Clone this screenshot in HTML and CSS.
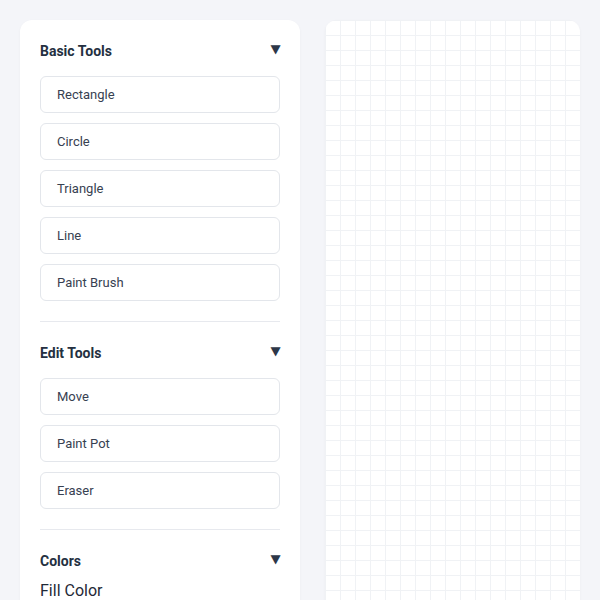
FILE: index.html
```html
<!DOCTYPE html>
<html>
<head>
<meta charset="utf-8">
<link rel="stylesheet" href="styles.css">
</head>
<body>
<div class="app">
  <aside class="panel">
    <section class="section">
      <div class="section-header"><h2>Basic Tools</h2><span class="caret">▼</span></div>
      <div class="tools">
        <button class="tool">Rectangle</button>
        <button class="tool">Circle</button>
        <button class="tool">Triangle</button>
        <button class="tool">Line</button>
        <button class="tool">Paint Brush</button>
      </div>
    </section>
    <section class="section">
      <div class="section-header"><h2>Edit Tools</h2><span class="caret">▼</span></div>
      <div class="tools">
        <button class="tool">Move</button>
        <button class="tool">Paint Pot</button>
        <button class="tool">Eraser</button>
      </div>
    </section>
    <section class="section last">
      <div class="section-header"><h2>Colors</h2><span class="caret">▼</span></div>
      <div class="colors">
        <label class="color-label">Fill Color</label>
      </div>
    </section>
  </aside>
  <main class="canvas"></main>
</div>
</body>
</html>
```
FILE: styles.css
```css
* { box-sizing: border-box; }
html, body { margin: 0; padding: 0; }
body {
  background: #f4f5f9;
  font-family: Roboto, "Liberation Sans", sans-serif;
  color: #1f2937;
  height: 600px;
  overflow: hidden;
}
.app {
  display: flex;
  gap: 25px;
  padding: 20px;
  align-items: flex-start;
}
.panel {
  width: 280px;
  flex: none;
  background: #fff;
  border-radius: 12px;
  padding: 20px;
  box-shadow: 0 1px 3px rgba(15, 23, 42, 0.04);
}
.section {
  padding: 20px 0;
  border-bottom: 1px solid #e7e9ee;
}
.section:first-child { padding-top: 0; }
.section.last { border-bottom: none; }
.section-header {
  display: flex;
  justify-content: space-between;
  align-items: center;
  height: 22px;
}
.section-header h2 {
  margin: 0;
  font-size: 14px;
  font-weight: 700;
  color: #243041;
  line-height: 20px;
}
.caret {
  font-size: 12px;
  color: #2d3748;
  line-height: 20px;
  font-family: "DejaVu Sans", sans-serif;
  transform: scaleX(1.1) translateY(-2px);
}
.tools {
  display: flex;
  flex-direction: column;
  gap: 10px;
  margin-top: 14px;
}
.tool {
  height: 37px;
  width: 100%;
  text-align: left;
  padding: 0 16px;
  background: #fff;
  border: 1px solid #e3e6eb;
  border-radius: 6px;
  font-family: Roboto, "Liberation Sans", sans-serif;
  font-size: 13px;
  color: #374151;
}
.colors { margin-top: 9px; }
.color-label {
  display: block;
  font-size: 16px;
  line-height: 20px;
  color: #1f2937;
}
.canvas {
  flex: 1;
  height: 640px;
  background-color: #fff;
  border-radius: 12px;
  background-image:
    linear-gradient(to bottom, #f0f2f5 1px, transparent 1px),
    linear-gradient(to right, #f0f2f5 1px, transparent 1px);
  background-size: 15px 15px;
  box-shadow: 0 1px 3px rgba(15, 23, 42, 0.04);
}
```
